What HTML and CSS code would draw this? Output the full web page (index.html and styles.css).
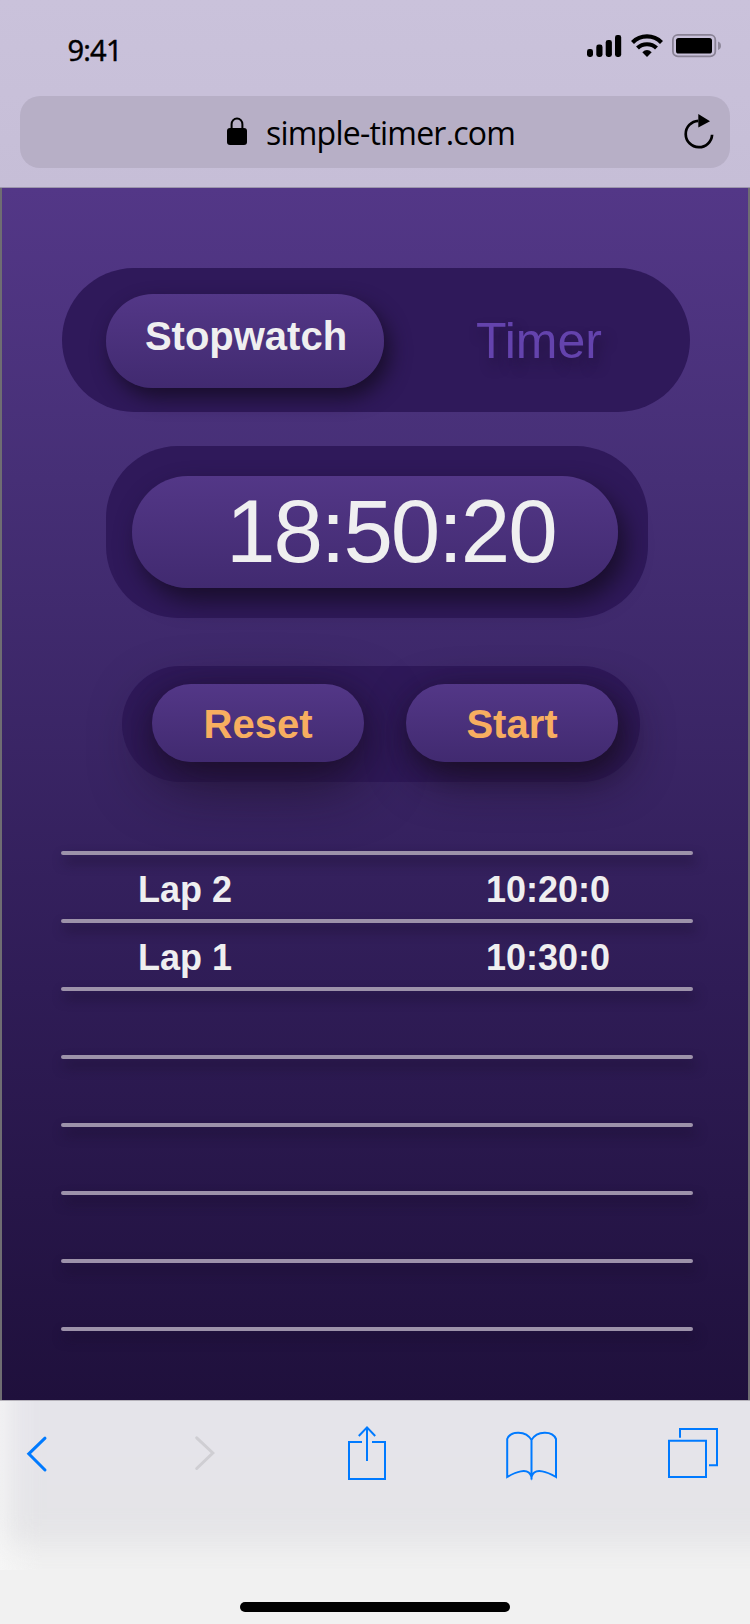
FILE: index.html
```html
<!DOCTYPE html>
<html lang="en">
<head>
<meta charset="utf-8">
<title>Simple Timer</title>
<link rel="stylesheet" href="styles.css">
</head>
<body>
<div class="phone">
  <header class="browser-top">
    <div class="status-bar">
      <span class="clock">9:41</span>
      <svg class="status-icons" width="136" height="26" viewBox="0 0 136 26">
        <rect x="1" y="16" width="6" height="8" rx="2.4"/>
        <rect x="10.3" y="11.5" width="6.2" height="12.5" rx="2.4"/>
        <rect x="19.7" y="7" width="6.2" height="17" rx="2.4"/>
        <rect x="29" y="2" width="6.2" height="22" rx="2.4"/>
        <g fill="none" stroke="#000" stroke-width="4.2">
          <path d="M46.5 9.4 A20.5 20.5 0 0 1 75.5 9.4"/>
          <path d="M51.5 15.1 A13.6 13.6 0 0 1 70.5 15.1"/>
        </g>
        <path d="M61 24 L56.3 19.2 Q61 14.8 65.7 19.2 Z"/>
        <rect x="86.9" y="1.9" width="42.4" height="21.4" rx="5" fill="none" stroke="#8a8396" stroke-width="1.8"/>
        <rect x="90" y="5" width="36" height="15.5" rx="2.6"/>
        <path d="M132 8.6 Q135 9.6 135 12.8 Q135 16 132 17 Z" fill="#8f889b"/>
      </svg>
    </div>
    <div class="address-bar">
      <svg class="lock" width="20" height="28" viewBox="0 0 20 28">
        <path d="M4.6 12 V7.2 A5.4 5.8 0 0 1 15.4 7.2 V12" fill="none" stroke="#000" stroke-width="2"/>
        <rect x="0" y="11" width="20" height="17" rx="3"/>
      </svg>
      <span class="url">simple-timer.com</span>
      <svg class="reload" width="32" height="38" viewBox="0 0 32 38">
        <path d="M29.1 21.7 A13.2 13.2 0 1 1 15.3 7.8" fill="none" stroke="#000" stroke-width="2.7"/>
        <path d="M15.3 1 L27 8.3 L15.3 14.6 Z"/>
      </svg>
    </div>
  </header>

  <main class="app">
    <nav class="modes">
      <div class="mode-active">Stopwatch</div>
      <div class="mode-idle">Timer</div>
    </nav>
    <section class="display">
      <div class="time">18:50:20</div>
    </section>
    <section class="controls">
      <div class="button">Reset</div>
      <div class="button button-start">Start</div>
    </section>
    <section class="laps">
      <div class="rule"></div>
      <div class="lap"><span class="lap-name">Lap 2</span><span>10:20:0</span></div>
      <div class="rule"></div>
      <div class="lap"><span class="lap-name">Lap 1</span><span>10:30:0</span></div>
      <div class="rule"></div>
      <div class="lap"></div>
      <div class="rule"></div>
      <div class="lap"></div>
      <div class="rule"></div>
      <div class="lap"></div>
      <div class="rule"></div>
      <div class="lap"></div>
      <div class="rule"></div>
      <div class="lap"></div>
      <div class="rule"></div>
    </section>
  </main>

  <footer class="browser-bottom">
    <div class="haze"><div class="haze-fill"></div></div>
    <div class="toolbar">
      <svg width="24" height="60" viewBox="0 0 24 60" class="line-icon back"><path d="M19 14.2 L2.8 29.8 L19 46"/></svg>
      <svg width="24" height="60" viewBox="0 0 24 60" class="line-icon forward"><path d="M4.7 13.8 L20.8 29 L4.7 44.5"/></svg>
      <svg width="42" height="60" viewBox="0 0 42 60" class="line-icon">
        <path d="M16 18 H3 V55 H39 V18 H26"/><path d="M21 37 V3.2"/><path d="M12.8 12 L21 3.4 L29.2 12"/>
      </svg>
      <svg width="52" height="60" viewBox="0 0 52 60" class="line-icon">
        <path d="M26.5 16 C21 6.5 5.5 6.5 2.2 15 V53 C9 49 23.5 42 26.5 53 C29.500 42 44 49 51 53 V15 C47.500 6.500 32 6.500 26.500 16 V55.500"/>
      </svg>
      <svg width="52" height="60" viewBox="0 0 52 60" class="line-icon">
        <path d="M2 16.7 H39 V53 H2 Z"/><path d="M13 13.8 V5 H50 V41.3 H42"/>
      </svg>
    </div>
    <div class="home-indicator"></div>
  </footer>
</div>
</body>
</html>
```
FILE: styles.css
```css
* { box-sizing: border-box; }
body { margin: 0; font-family: "Liberation Sans", Arial, sans-serif; }
svg { display: block; overflow: visible; }

.phone { width: 750px; height: 1624px; overflow: hidden; display: flex; flex-direction: column; }

.browser-top {
  height: 188px;
  padding: 0 20px;
  background: linear-gradient(#cac2db, #c6bed7);
  border-bottom: 1px solid #9c95ac;
}
.status-bar {
  height: 96px;
  padding: 33px 8px 0 47.5px;
  display: flex;
  justify-content: space-between;
}
.clock {
  font: 500 29px/33px "Open Sans", sans-serif;
  letter-spacing: -0.8px;
  -webkit-text-stroke: 0.5px #000;
}
.address-bar {
  height: 72px;
  padding: 0 15px 0 207px;
  border-radius: 20px;
  background: #b7afc6;
  display: flex;
}
.lock { margin-top: 21px; }
.url {
  margin-left: 19px;
  font: 400 32px/73px "Open Sans", sans-serif;
  letter-spacing: -0.78px;
}
.reload { margin: 17px 0 0 auto; }

.app {
  height: 1212px;
  padding: 80px 59px 0 60px;
  border: solid #6f6d72;
  border-width: 0 2px;
  background: linear-gradient(#533787 0%, #462f76 24%, #2f1c56 66%, #1f103c 100%);
}
.modes {
  width: 628px;
  height: 144px;
  padding: 26px 44px;
  border-radius: 72px;
  background: #2f195a;
  display: flex;
}
.mode-active, .time, .button {
  background: linear-gradient(#533787, #412a70);
  color: #efeff0;
}
.mode-active {
  width: 278px;
  height: 94px;
  padding-left: 2px;
  border-radius: 47px;
  box-shadow: 6px 10px 20px #190e2c;
  font: bold 40px/84px "Liberation Sans", Arial, sans-serif;
  text-align: center;
}
.mode-idle {
  margin-left: 92px;
  font-size: 50px;
  line-height: 95px;
  color: #6443ad;
  text-shadow: 4px 8px 12px rgba(25, 14, 44, .5);
}
.display {
  width: 542px;
  height: 172px;
  margin: 34px 0 0 44px;
  padding: 30px 26px;
  border-radius: 72px;
  background: #2f195a;
}
.time {
  width: 486px;
  height: 112px;
  padding-left: 94px;
  border-radius: 56px;
  box-shadow: 8px 13px 24px #190e2c;
  font-size: 89px;
  line-height: 111px;
  letter-spacing: -2.1px;
}
.controls {
  width: 518px;
  height: 116px;
  margin: 48px 0 0 60px;
  padding: 18px 22px 0 30px;
  border-radius: 58px;
  background: #2f195a;
  display: flex;
  justify-content: space-between;
}
.button {
  width: 212px;
  height: 78px;
  border-radius: 39px;
  box-shadow: 0 20px 60px rgba(24, 13, 30, .75), 0 6px 20px rgba(24, 13, 40, .4);
  color: #f7ae60;
  font: bold 40px/80px "Liberation Sans", Arial, sans-serif;
  text-align: center;
}
.button-start { box-shadow: 8px 16px 46px rgba(24, 13, 30, .75), 3px 8px 20px rgba(24, 13, 40, .5); }

.laps { width: 632px; margin: 69px 0 0 -1px; }
.rule {
  height: 4px;
  border-radius: 2px;
  background: #9d92aa;
  box-shadow: 3px 7px 12px rgba(24, 13, 40, .75);
}
.lap {
  height: 64px;
  padding: 3px 83px 0 77px;
  display: flex;
  justify-content: space-between;
  color: #efeff0;
  font: bold 36px/64px "Liberation Sans", Arial, sans-serif;
}

.browser-bottom {
  position: relative;
  height: 224px;
  border-top: 1px solid #b5b2ba;
  background: #f1f1f1;
}
/* soft tint that fades out at the left and lower edges of the bar */
.haze {
  position: absolute;
  inset: 0 0 auto 0;
  height: 169px;
  overflow: hidden;
  background: linear-gradient(90deg, #f6f6f6, #f1f1f1 40px);
}
.haze-fill {
  position: absolute;
  inset: -60px -60px 26px 9px;
  background: linear-gradient(#e5e4ea 50%, #e4e4e6);
  filter: blur(14px);
}
.toolbar {
  position: relative;
  height: 201px;
  padding: 23px 0 0 26px;
  display: grid;
  grid-template-columns: 166px 154px 159px 162px 52px;
}
.line-icon { fill: none; stroke: #007aff; stroke-width: 2; }
.back { stroke-width: 3; stroke-linecap: round; }
.forward { stroke: #cfced3; stroke-width: 3; stroke-linecap: round; }
.home-indicator {
  position: relative;
  width: 270px;
  height: 10px;
  margin: 0 auto;
  border-radius: 5px;
  background: #000;
}
```
